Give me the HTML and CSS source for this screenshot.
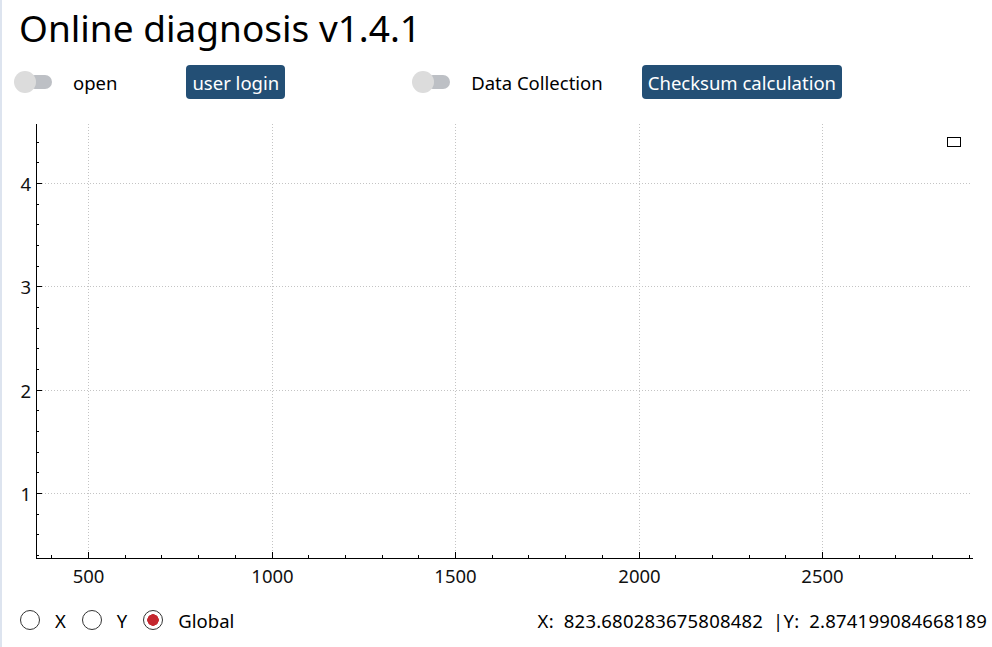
FILE: index.html
```html
<!DOCTYPE html>
<html lang="en">
<head>
  <meta charset="UTF-8">
  <title>Online diagnosis</title>
  <link rel="stylesheet" href="styles.css">
</head>
<body>
  <div class="page">
    <span class="edge-mark"></span>
    <h1>Online diagnosis v1.4.1</h1>

    <div class="controls">
      <label class="switch"><span class="knob"></span></label>
      <span class="label label-open">open</span>
      <button class="btn btn-login">user login</button>

      <label class="switch switch-collect"><span class="knob"></span></label>
      <span class="label">Data Collection</span>
      <button class="btn btn-checksum">Checksum calculation</button>
    </div>

    <svg id="plot" class="plot" width="990" height="480" viewBox="0 0 990 480">
      <g id="grid"></g>
      <g id="axes"></g>
      <rect class="legend" x="945.5" y="22.5" width="13" height="9"></rect>
    </svg>

    <div class="footer">
      <div class="radios">
        <label class="radio"><span class="dot"></span>X</label>
        <label class="radio"><span class="dot"></span>Y</label>
        <label class="radio checked"><span class="dot"></span>Global</label>
      </div>
      <div class="cursor">X:&nbsp; 823.680283675808482 &nbsp;|Y:&nbsp; 2.874199084668189</div>
    </div>
  </div>

  <script>
    (function () {
      // plot frame in svg coords
      const frame = {left: 34, right: 971, top: 9, bottom: 443};
      const xPos = u => 86 + (u - 500) * 0.367;
      const yPos = v => 378 - (v - 1) * 103.33;
      const ns = 'http://www.w3.org/2000/svg';
      const grid = document.getElementById('grid');
      const axes = document.getElementById('axes');

      function el(parent, tag, attrs, text) {
        const n = document.createElementNS(ns, tag);
        for (const k in attrs) n.setAttribute(k, attrs[k]);
        if (text) n.textContent = text;
        parent.appendChild(n);
        return n;
      }

      el(axes, 'line', {x1: frame.left + 0.5, y1: frame.top, x2: frame.left + 0.5, y2: frame.bottom + 1, class: 'axis'});
      el(axes, 'line', {x1: frame.left, y1: frame.bottom + 0.5, x2: frame.right, y2: frame.bottom + 0.5, class: 'axis'});

      for (let u = 400; u <= 2900; u += 100) {
        const x = Math.round(xPos(u)) + 0.5;
        const major = u % 500 === 0;
        el(axes, 'line', {x1: x, y1: frame.bottom, x2: x, y2: frame.bottom - (major ? 6 : 3), class: 'axis'});
        if (major) {
          el(grid, 'line', {x1: x, y1: frame.top, x2: x, y2: frame.bottom - 6, class: 'grid'});
          el(axes, 'text', {x: x, y: 468, class: 'tick-x'}, String(u));
        }
      }

      for (let i = 2; i <= 22; i++) {
        const v = i / 5;
        const y = Math.round(yPos(v)) + 0.5;
        const major = i % 5 === 0;
        el(axes, 'line', {x1: frame.left, y1: y, x2: frame.left + (major ? 6 : 3), y2: y, class: 'axis'});
        if (major) {
          el(grid, 'line', {x1: frame.left + 6, y1: y, x2: 968, y2: y, class: 'grid'});
          el(axes, 'text', {x: 29, y: y + 7, class: 'tick-y'}, String(v));
        }
      }
    })();
  </script>
</body>
</html>
```

FILE: styles.css
```css
body {
  margin: 0;
  font-family: "Noto Sans", "Open Sans", sans-serif;
  color: #000;
  background: #fff;
}
.page {
  position: relative;
  width: 990px;
  height: 647px;
  border-left: 2px solid #dde4ef;
  overflow: hidden;
}
.edge-mark {
  position: absolute;
  left: -2px;
  top: 397px;
  width: 2px;
  height: 39px;
  background: #d3202c;
}
h1 {
  margin: 0;
  padding-left: 17px;
  font-size: 37px;
  font-weight: normal;
  line-height: 56px;
}
.controls {
  display: flex;
  align-items: center;
  height: 34px;
  margin-top: 9px;
  padding-left: 12px;
}
.switch {
  position: relative;
  width: 38px;
  height: 22px;
}
.switch::before {
  content: "";
  position: absolute;
  left: 14px;
  top: 4px;
  width: 24px;
  height: 14px;
  border-radius: 7px;
  background: #bdc0c5;
}
.knob {
  position: absolute;
  left: 0;
  top: 0;
  width: 22px;
  height: 22px;
  border-radius: 50%;
  background: #dcdcdc;
}
.switch-collect {
  margin-left: 127px;
}
.label {
  margin-left: 21px;
  font-size: 18.5px;
}
.btn {
  height: 34px;
  padding: 0 6px;
  border: none;
  border-radius: 4px;
  background: #234f75;
  color: #fff;
  font-family: inherit;
  font-size: 18.5px;
}
.btn-login {
  margin-left: 69px;
}
.btn-checksum {
  margin-left: 39px;
}
.plot {
  display: block;
  margin-top: 16px;
}
.axis {
  stroke: #000;
  stroke-width: 1;
}
.grid {
  stroke: #c4c4c4;
  stroke-width: 1;
  stroke-dasharray: 1 2;
}
.legend {
  fill: #fff;
  stroke: #000;
  stroke-width: 1;
}
.tick-x, .tick-y {
  font-family: "Noto Sans", sans-serif;
  font-size: 18.5px;
  fill: #111;
}
.tick-x {
  text-anchor: middle;
}
.tick-y {
  text-anchor: end;
}
.footer {
  display: flex;
  justify-content: space-between;
  align-items: center;
  height: 26px;
  margin-top: 12px;
  padding: 0 5px 0 18px;
  font-size: 18.5px;
}
.radios {
  display: flex;
  gap: 16px;
}
.radio {
  display: flex;
  align-items: center;
  gap: 15px;
}
.dot {
  box-sizing: border-box;
  width: 20px;
  height: 20px;
  border: 1.5px solid #333;
  border-radius: 50%;
}
.radio.checked .dot {
  background: radial-gradient(circle, #c4272f 0 5.5px, #fff 6px);
}
.cursor {
  letter-spacing: 0.2px;
}
```
